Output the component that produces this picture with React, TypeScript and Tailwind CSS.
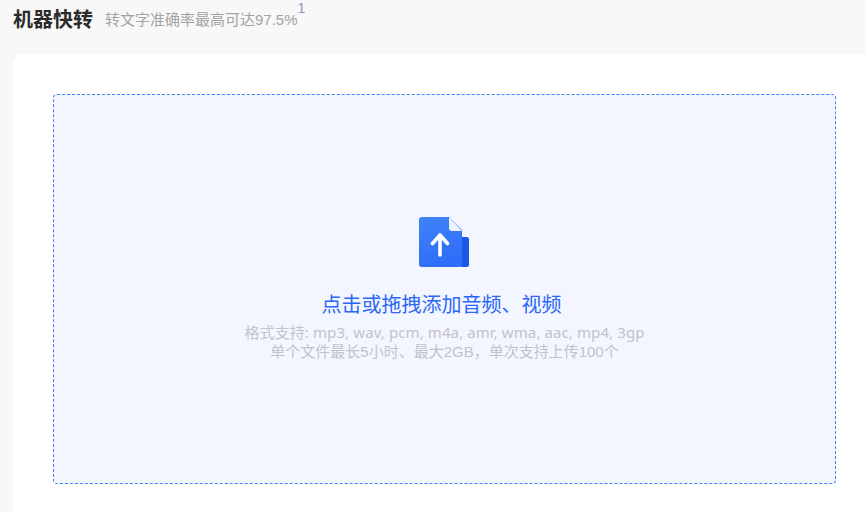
const fontStack = { fontFamily: '"Liberation Sans", "Noto Sans CJK SC", sans-serif' };
const latinWide = { fontFamily: '"Noto Sans", "Noto Sans CJK SC", sans-serif' };

function UploadIcon() {
  return (
    <svg width="50" height="50" viewBox="0 0 50 50" className="block">
      <defs>
        <linearGradient id="fileFill" x1="0.2" y1="0" x2="0.5" y2="1">
          <stop offset="0" stopColor="#3f82f8" />
          <stop offset="1" stopColor="#2f6cf7" />
        </linearGradient>
      </defs>
      <path d="M42 20h5.5a2.5 2.5 0 0 1 2.5 2.5v25a2.5 2.5 0 0 1-2.5 2.5H42z" fill="#1a59e8" />
      <path d="M3 0h27l13 13v34a3 3 0 0 1-3 3H3a3 3 0 0 1-3-3V3a3 3 0 0 1 3-3z" fill="url(#fileFill)" />
      <path d="M30 0l13 14h-10a3 3 0 0 1-3-3z" fill="#eef3fe" />
      <path d="M21 38V18M13.5 26.5L21 18l7.5 8.5" fill="none" stroke="#fff" strokeWidth="3.6" strokeLinecap="round" strokeLinejoin="round" />
    </svg>
  );
}

export default function App() {
  return (
    <div className="h-[512px] w-[865px] overflow-hidden bg-[#f8f8f8]" style={fontStack}>
      <header className="flex h-[54px] items-start pl-[13px]">
        <h1 className="mt-[7px] text-[20px] leading-[26px] font-bold text-[#2b2b2b]">机器快转</h1>
        <p className="mt-[10px] ml-[12px] text-[15px] leading-[20px] text-[#a3a3a3]">转文字准确率最高可达97.5%</p>
        <span className="mt-[1px] text-[14px] leading-[14px] text-[#8a97b8]">1</span>
      </header>
      <main className="ml-[13px] h-[458px] rounded-tl-[10px] bg-white pt-[40px] pl-[40px]">
        <div className="flex h-[390px] w-[783px] flex-col items-center rounded-[4px] border border-dashed border-[#3f83f8] bg-[#f3f6ff] pt-[122px]">
          <div className="-translate-x-px">
            <UploadIcon />
          </div>
          <p className="mt-[25px] -translate-x-[3px] text-[20px] leading-[27px] text-[#2b66f6]">点击或拖拽添加音频、视频</p>
          <p className="mt-[4px] text-[15px] leading-[18px] tracking-[0.1px] text-[#c2c2c9]" style={latinWide}>格式支持: mp3, wav, pcm, m4a, amr, wma, aac, mp4, 3gp</p>
          <p className="mt-[1px] text-[15px] leading-[20px] text-[#c2c2c9]">单个文件最长5小时、最大2GB，单次支持上传100个</p>
        </div>
      </main>
    </div>
  );
}
